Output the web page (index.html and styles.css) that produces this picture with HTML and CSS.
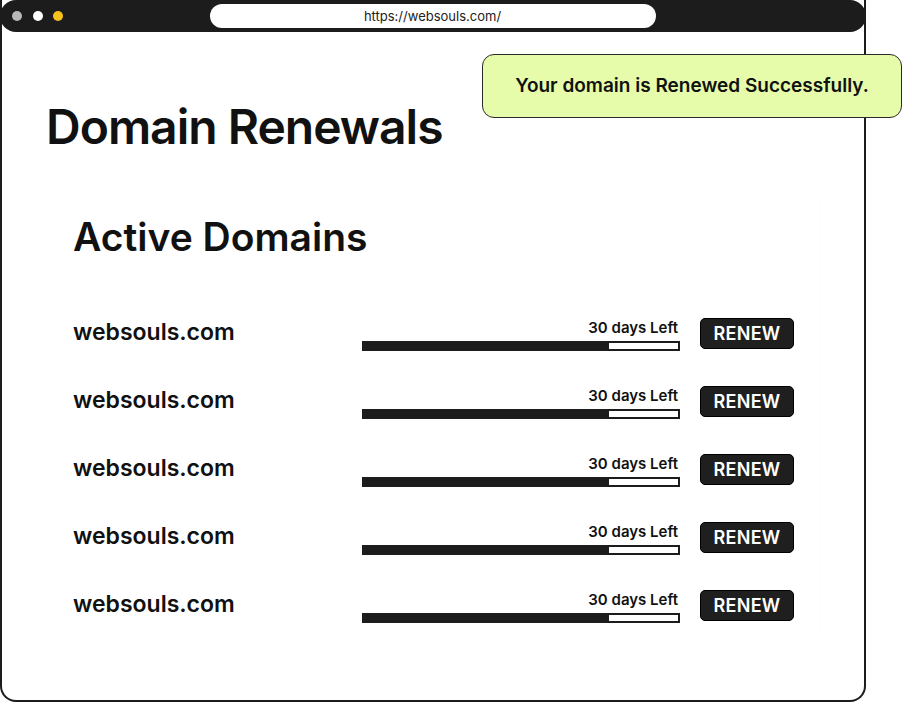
FILE: index.html
```html
<!DOCTYPE html>
<html lang="en">
<head>
    <meta charset="UTF-8">
    <meta name="viewport" content="width=device-width, initial-scale=1.0">
    <title>Domain Renewals</title>
    <link rel="stylesheet" href="styles.css">
</head>
<body>
    <div class="frame">
        <!-- browser bar -->
        <div class="topbar">
            <span class="dot grey"></span>
            <span class="dot white"></span>
            <span class="dot yellow"></span>
            <div class="url">https://websouls.com/</div>
        </div>

        <h1>Domain Renewals</h1>

        <div class="card">
            <h2>Active Domains</h2>

            <div class="row">
                <div class="name">websouls.com</div>
                <div class="left">
                    <div class="days">30 days Left</div>
                    <div class="bar"><div class="fill" style="width: 78%"></div></div>
                </div>
                <button class="btn">RENEW</button>
            </div>
            <div class="row">
                <div class="name">websouls.com</div>
                <div class="left">
                    <div class="days">30 days Left</div>
                    <div class="bar"><div class="fill" style="width: 78%"></div></div>
                </div>
                <button class="btn">RENEW</button>
            </div>
            <div class="row">
                <div class="name">websouls.com</div>
                <div class="left">
                    <div class="days">30 days Left</div>
                    <div class="bar"><div class="fill" style="width: 78%"></div></div>
                </div>
                <button class="btn">RENEW</button>
            </div>
            <div class="row">
                <div class="name">websouls.com</div>
                <div class="left">
                    <div class="days">30 days Left</div>
                    <div class="bar"><div class="fill" style="width: 78%"></div></div>
                </div>
                <button class="btn">RENEW</button>
            </div>
            <div class="row">
                <div class="name">websouls.com</div>
                <div class="left">
                    <div class="days">30 days Left</div>
                    <div class="bar"><div class="fill" style="width: 78%"></div></div>
                </div>
                <button class="btn">RENEW</button>
            </div>
        </div>
    </div>

    <div class="toast">Your domain is Renewed Successfully.</div>
</body>
</html>
```

FILE: styles.css
```css
* {
    box-sizing: border-box;
}
body {
    margin: 0;
    background: #fff;
    font-family: Inter, "Noto Sans", sans-serif;
    color: #111;
}
.frame {
    width: 866px;
    height: 702px;
    border: 2px solid #1c1c1c;
    border-top: none;
    border-radius: 0 0 16px 16px;
}
.topbar {
    display: flex;
    align-items: center;
    height: 32px;
    margin: 0 -2px;
    padding-left: 12px;
    background: #1c1c1c;
    border-radius: 16px;
}
.dot {
    width: 10px;
    height: 10px;
    border-radius: 50%;
    margin-right: 10.5px;
}
.grey { background: #b8b8b8; }
.white { background: #fff; }
.yellow { background: #f6c31c; }
.url {
    margin-left: 136px;
    width: 446px;
    height: 24px;
    background: #fff;
    border-radius: 12px;
    font-size: 13px;
    line-height: 24px;
    text-align: center;
    color: #222;
}
h1 {
    margin: 66px 0 0 44px;
    font-size: 48px;
    font-weight: 600;
    letter-spacing: -1px;
    line-height: 58px;
}
.card {
    margin: 24px 0 0 44px;
    width: 774px;
    height: 472px;
    padding: 34px 26px 0 27px;
    background: #fff;
    border-radius: 14px;
    box-shadow: 0 0 2px rgba(0, 0, 0, 0.03);
}
h2 {
    margin: 0 0 39px;
    font-size: 39px;
    font-weight: 600;
    line-height: 46px;
}
.row {
    display: flex;
    align-items: center;
    height: 68px;
}
.name {
    flex: 1;
    font-size: 23px;
    font-weight: 600;
    padding-bottom: 3px;
}
.left {
    width: 318px;
    padding-top: 3px;
}
.days {
    text-align: right;
    font-size: 15px;
    font-weight: 600;
    line-height: 18px;
    margin-bottom: 4px;
    padding-right: 2px;
}
.bar {
    height: 10px;
    border: 2px solid #1c1c1c;
    background: #fff;
}
.fill {
    height: 100%;
    background: #1c1c1c;
}
.btn {
    margin-left: 20px;
    width: 94px;
    height: 31px;
    padding: 0;
    background: #1f1f1f;
    color: #fff;
    border: 1px solid #000;
    border-radius: 5px;
    font-family: Inter, "Noto Sans", sans-serif;
    font-size: 18px;
    font-weight: 600;
    letter-spacing: 0.3px;
}
.toast {
    position: absolute;
    left: 482px;
    top: 54px;
    width: 420px;
    height: 64px;
    background: #e6fcaa;
    border: 1px solid #2a2a2a;
    border-radius: 12px;
    font-size: 19px;
    font-weight: 600;
    line-height: 62px;
    text-align: center;
}
```
